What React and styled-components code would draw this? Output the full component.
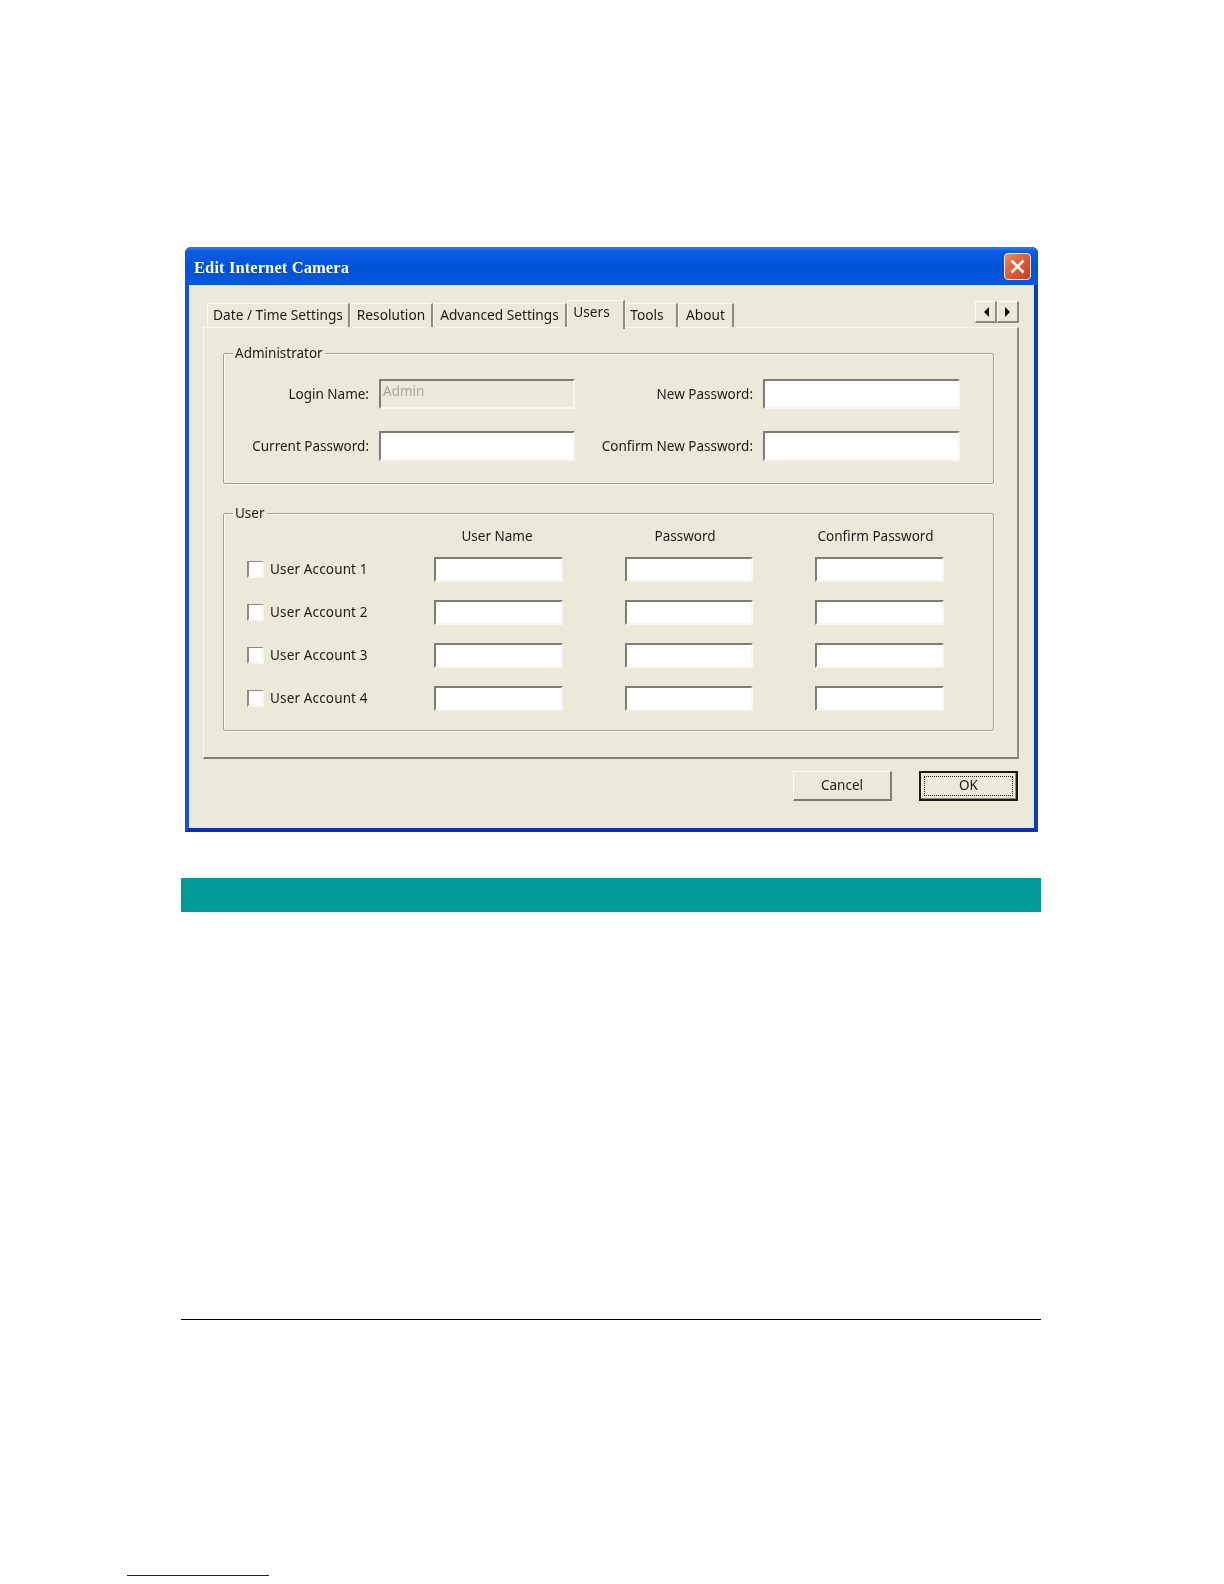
import styled, { createGlobalStyle } from "styled-components";

const GlobalStyle = createGlobalStyle`
  html, body {
    margin: 0;
    padding: 0;
    background: #fff;
  }
`;

const Page = styled.div`
  width: 1224px;
  height: 1584px;
  overflow: hidden;
  padding-top: 247px;
  box-sizing: border-box;
  font-family: "Noto Sans", "Liberation Sans", sans-serif;
`;

const Dialog = styled.div`
  width: 853px;
  height: 585px;
  margin-left: 185px;
  box-sizing: border-box;
  display: flex;
  flex-direction: column;
  background: #1554d8;
  border-radius: 6px 6px 0 0;
  border-bottom: 4px solid #0a2fb8;
  border-right: 4px solid #0a3cc8;
  border-left: 4px solid #1554d8;
  filter: blur(0.35px);
`;

const TitleBar = styled.div`
  height: 38px;
  flex: none;
  margin: 0 -4px;
  padding: 0 7px 0 9px;
  display: flex;
  align-items: center;
  justify-content: space-between;
  border-radius: 6px 6px 0 0;
  background: linear-gradient(180deg, #2a7cf0 0%, #0a5ce6 12%, #0052d6 55%, #0558e0 100%);
`;

const Title = styled.span`
  padding-top: 3px;
  font-family: "Liberation Serif", serif;
  font-weight: 700;
  font-size: 16.5px;
  letter-spacing: 0.1px;
  color: #fff;
`;

const CloseButton = styled.button`
  width: 27px;
  height: 27px;
  padding: 0;
  display: flex;
  align-items: center;
  justify-content: center;
  border: 1px solid #f4e8e0;
  border-radius: 4px;
  background: linear-gradient(135deg, #ea8a64 0%, #dc5a32 50%, #c8401c 100%);
`;

const Client = styled.div`
  flex: 1;
  padding: 0 15px 0 14px;
  background: #ebe9d9;
  color: #1c1c16;
  font-size: 13.5px;
`;

const TabStrip = styled.div`
  height: 42px;
  padding-left: 4px;
  display: flex;
  align-items: flex-end;
`;

const Tab = styled.div`
  height: ${({ $active }) => ($active ? "29px" : "24px")};
  width: ${({ $width }) => $width}px;
  margin-bottom: ${({ $active }) => ($active ? "-2px" : "0")};
  box-sizing: border-box;
  position: relative;
  z-index: ${({ $active }) => ($active ? 1 : 0)};
  padding-bottom: ${({ $active }) => ($active ? "7px" : "2px")};
  padding-right: ${({ $shift }) => $shift || 0}px;
  display: flex;
  align-items: center;
  justify-content: center;
  white-space: nowrap;
  font-size: 13.7px;
  background: #ebe9d9;
  border-top: 1px solid #fbfaf2;
  border-left: 1px solid #fbfaf2;
  border-right: 2px solid #8c8b7c;
`;

const Scroller = styled.div`
  margin-left: auto;
  align-self: flex-start;
  margin-top: 16px;
  display: flex;
`;

const ScrollButton = styled.div`
  width: 22px;
  height: 22px;
  box-sizing: border-box;
  display: flex;
  align-items: center;
  justify-content: center;
  border-top: 1px solid #fbfaf2;
  border-left: 1px solid #fbfaf2;
  border-right: 2px solid #8c8b7c;
  border-bottom: 2px solid #8c8b7c;
`;

const Panel = styled.div`
  height: 432px;
  box-sizing: border-box;
  padding: 25px 23px 0 19px;
  display: flex;
  flex-direction: column;
  gap: 29px;
  border-top: 1px solid #fbfaf2;
  border-left: 1px solid #fbfaf2;
  border-right: 2px solid #8c8b7c;
  border-bottom: 2px solid #807f70;
`;

const Group = styled.div`
  position: relative;
  height: ${({ $height }) => $height}px;
  box-sizing: border-box;
  border: 1px solid #a3a292;
  box-shadow: 1px 1px 0 #fbfaf2, inset 1px 1px 0 #fbfaf2;
  border-radius: 2px;
`;

const Legend = styled.span`
  position: absolute;
  top: -10px;
  left: 9px;
  padding: 0 2px;
  line-height: 19px;
  background: #ebe9d9;
`;

const AdminGrid = styled.div`
  padding-top: 25px;
  display: grid;
  grid-template-columns: 145px 196px 168px 197px;
  grid-auto-rows: 30px;
  column-gap: 10px;
  row-gap: 22px;
  align-items: center;
`;

const FieldLabel = styled.label`
  text-align: right;
  white-space: nowrap;
`;

const TextBox = styled.input`
  width: 100%;
  height: ${({ $small }) => ($small ? "25px" : "30px")};
  box-sizing: border-box;
  padding: 0 0 6px 2px;
  font: inherit;
  color: #aca899;
  background: ${({ disabled }) => (disabled ? "#ebe9d9" : "#fff")};
  border-style: solid;
  border-width: 2px;
  border-color: #7f7e70 #f8f7ef #f8f7ef #7f7e70;
  outline: none;
`;

const UserList = styled.div`
  padding: 13px 0 0 23px;
  display: flex;
  flex-direction: column;
  gap: 18px;
`;

const UserRow = styled.div`
  display: grid;
  grid-template-columns: 125px 129px 128px 129px;
  column-gap: 62px;
  align-items: center;
`;

const HeaderRow = styled(UserRow)`
  height: 18px;
  margin-bottom: -6px;
`;

const ColumnTitle = styled.span`
  text-align: center;
  padding-right: ${({ $shift }) => $shift}px;
  white-space: nowrap;
`;

const AccountLabel = styled.label`
  display: flex;
  align-items: center;
  gap: 6px;
  white-space: nowrap;
`;

const AccountText = styled.span`
  padding-bottom: 1px;
  letter-spacing: 0.15px;
`;

const CheckBox = styled.input`
  appearance: none;
  width: 17px;
  height: 17px;
  margin: 0;
  flex: none;
  background: #fff;
  border-style: solid;
  border-width: 1px 2px 2px 2px;
  border-color: #8c8b7c #f8f7ef #f8f7ef #8c8b7c;
  box-sizing: border-box;
`;

const Footer = styled.div`
  padding: 12px 1px 0 0;
  display: flex;
  justify-content: flex-end;
  gap: 27px;
`;

const Button = styled.button`
  width: 99px;
  height: 30px;
  padding: 0 0 2px;
  font: inherit;
  color: #1c1c16;
  background: #ebe9d9;
  border-style: solid;
  border-width: 1px 2px 2px 1px;
  border-color: #fbfaf2 #807f70 #807f70 #fbfaf2;
`;

const DefaultButton = styled(Button)`
  position: relative;
  border: 2px solid #1c1c14;
  box-shadow: inset -1px -1px 0 #8c8b7c;

  &::after {
    content: "";
    position: absolute;
    inset: 3px;
    border: 1px dotted #22221c;
  }
`;

const Band = styled.div`
  width: 860px;
  height: 34px;
  margin: 46px 0 0 181px;
  background: #009b98;
`;

const Rule = styled.div`
  width: 860px;
  height: 1px;
  margin: 407px 0 0 181px;
  background: #000;
`;

const FootnoteRule = styled.div`
  width: 142px;
  height: 1px;
  margin: 255px 0 0 127px;
  background: #1414a0;
`;

const accounts = [1, 2, 3, 4];

function CloseIcon() {
  return (
    <svg width="17" height="17" viewBox="0 0 17 17" fill="none">
      <path d="M2.5 2.5 L14.5 14.5 M14.5 2.5 L2.5 14.5" stroke="#fff" strokeWidth="2.6" />
    </svg>
  );
}

function Arrow({ left }) {
  return (
    <svg width="6" height="10" viewBox="0 0 6 10">
      <path d={left ? "M6 0 V10 L1 5 Z" : "M0 0 V10 L5 5 Z"} fill="#111" />
    </svg>
  );
}

export default function App() {
  return (
    <Page>
      <GlobalStyle />
      <Dialog>
        <TitleBar>
          <Title>Edit Internet Camera</Title>
          <CloseButton aria-label="Close">
            <CloseIcon />
          </CloseButton>
        </TitleBar>
        <Client>
          <TabStrip>
            <Tab $width={143}>Date / Time Settings</Tab>
            <Tab $width={83}>Resolution</Tab>
            <Tab $width={134}>Advanced Settings</Tab>
            <Tab $width={58} $active $shift={8}>Users</Tab>
            <Tab $width={53} $shift={8}>Tools</Tab>
            <Tab $width={56}>About</Tab>
            <Scroller>
              <ScrollButton><Arrow left /></ScrollButton>
              <ScrollButton><Arrow /></ScrollButton>
            </Scroller>
          </TabStrip>
          <Panel>
            <Group $height={131}>
              <Legend>Administrator</Legend>
              <AdminGrid>
                <FieldLabel>Login Name:</FieldLabel>
                <TextBox disabled defaultValue="Admin" />
                <FieldLabel>New Password:</FieldLabel>
                <TextBox />
                <FieldLabel>Current Password:</FieldLabel>
                <TextBox />
                <FieldLabel>Confirm New Password:</FieldLabel>
                <TextBox />
              </AdminGrid>
            </Group>
            <Group $height={218}>
              <Legend>User</Legend>
              <UserList>
                <HeaderRow>
                  <span />
                  <ColumnTitle $shift={3}>User Name</ColumnTitle>
                  <ColumnTitle $shift={8}>Password</ColumnTitle>
                  <ColumnTitle $shift={8}>Confirm Password</ColumnTitle>
                </HeaderRow>
                {accounts.map((n) => (
                  <UserRow key={n}>
                    <AccountLabel>
                      <CheckBox type="checkbox" />
                      <AccountText>User Account {n}</AccountText>
                    </AccountLabel>
                    <TextBox $small />
                    <TextBox $small />
                    <TextBox $small />
                  </UserRow>
                ))}
              </UserList>
            </Group>
          </Panel>
          <Footer>
            <Button>Cancel</Button>
            <DefaultButton>OK</DefaultButton>
          </Footer>
        </Client>
      </Dialog>
      <Band />
      <Rule />
      <FootnoteRule />
    </Page>
  );
}
